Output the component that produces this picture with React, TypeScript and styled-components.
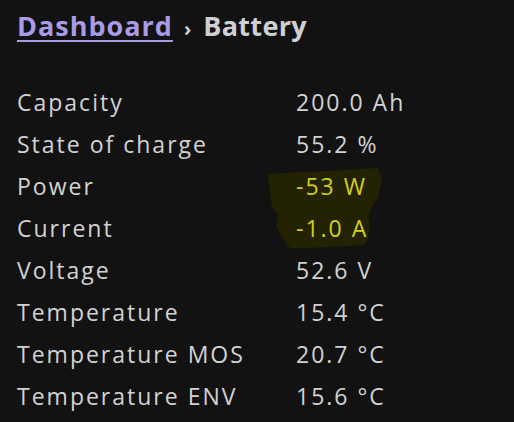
import React from "react";
import { FC } from "react";
import styled, { createGlobalStyle } from "styled-components";

const GlobalStyle = createGlobalStyle`
  html, body {
    margin: 0;
    padding: 0;
    background: #121212;
  }
  body {
    font-family: "Open Sans", "Noto Sans", sans-serif;
    color: #d2d2d2;
  }
`;

const Page = styled.main`
  width: 514px;
  height: 422px;
  padding: 4px 0 0 17px;
  box-sizing: border-box;
  overflow: hidden;
`;

const Crumbs = styled.h1`
  margin: 0;
  font-size: 27px;
  font-weight: 700;
  line-height: 44px;
  letter-spacing: 1px;
  color: #cfd0d4;
  display: flex;
  align-items: baseline;
  gap: 11px;
`;

const CrumbLink = styled.a`
  color: #a99be6;
  text-decoration: underline;
  text-decoration-thickness: 2px;
  text-underline-offset: 4px;
`;

const Sep = styled.span`
  font-size: 20px;
  color: #cfd0d4;
`;

const Current = styled.span`
  letter-spacing: 0.3px;
`;

const Table = styled.dl`
  margin: 30px 0 0;
  display: grid;
  grid-template-columns: 279px 1fr;
  grid-auto-rows: 42px;
  align-items: center;
  font-size: 23px;
  letter-spacing: 2px;
`;

const Label = styled.dt`
  margin: 0;
  color: #d2d2d2;
`;

const Value = styled.dd<{ $warn?: boolean }>`
  margin: 0;
  position: relative;
  color: ${(p) => (p.$warn ? "#d2cf1c" : "#d2d2d2")};
`;

const ValueText = styled.span`
  position: relative;
  z-index: 1;
`;

const Marker = styled.svg`
  position: absolute;
  left: -28px;
  top: -2px;
  width: 114px;
  height: 80px;
  z-index: 0;
  pointer-events: none;
`;

interface IRow {
  label: string;
  value: string;
  warn?: boolean;
  marker?: boolean;
}

const rows: IRow[] = [
  { label: "Capacity", value: "200.0 Ah" },
  { label: "State of charge", value: "55.2 %" },
  { label: "Power", value: "-53 W", warn: true, marker: true },
  { label: "Current", value: "-1.0 A", warn: true },
  { label: "Voltage", value: "52.6 V" },
  { label: "Temperature", value: "15.4 °C" },
  { label: "Temperature MOS", value: "20.7 °C" },
  { label: "Temperature ENV", value: "15.6 °C" },
];

const Highlight: FC = () => (
  <Marker viewBox="0 0 114 83" preserveAspectRatio="none" aria-hidden>
    <path
      d="M0 6 L60 3 L110 0 L114 14 L110 30 L104 40 L100 50 L102 60 L100 72 L96 80 L40 83 L22 83 L14 72 L8 60 L10 48 L4 40 L2 26 Z"
      fill="#232303"
    />
  </Marker>
);

export default function App() {
  return (
    <>
      <GlobalStyle />
      <Page>
        <Crumbs>
          <CrumbLink>Dashboard</CrumbLink>
          <Sep>›</Sep>
          <Current>Battery</Current>
        </Crumbs>
        <Table>
          {rows.map((r) => (
            <React.Fragment key={r.label}>
              <Label>{r.label}</Label>
              <Value $warn={r.warn}>
                {r.marker && <Highlight />}
                <ValueText>{r.value}</ValueText>
              </Value>
            </React.Fragment>
          ))}
        </Table>
      </Page>
    </>
  );
}
